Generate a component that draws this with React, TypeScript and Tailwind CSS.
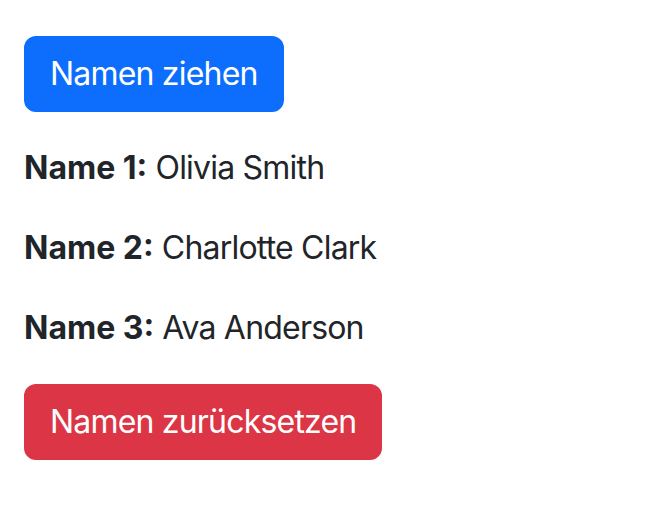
export default function App() {
  const names = ["Olivia Smith", "Charlotte Clark", "Ava Anderson"];

  return (
    <div className="min-h-screen bg-white px-[24px] pt-[36px] font-['Inter',sans-serif] text-[32px] leading-[48px] tracking-[-0.8px] text-[#212529]">
      <button className="mb-[32px] rounded-[12px] border-2 border-[#0d6efd] bg-[#0d6efd] px-[24px] py-[12px] text-white">
        Namen ziehen
      </button>
      {names.map((n, i) => (
        <p key={i} className="mb-[32px]">
          <strong className="font-bold tracking-normal">Name {i + 1}:</strong> {n}
        </p>
      ))}
      <button className="rounded-[12px] border-2 border-[#dc3545] bg-[#dc3545] px-[24px] py-[12px] text-white">
        Namen zurücksetzen
      </button>
    </div>
  );
}
